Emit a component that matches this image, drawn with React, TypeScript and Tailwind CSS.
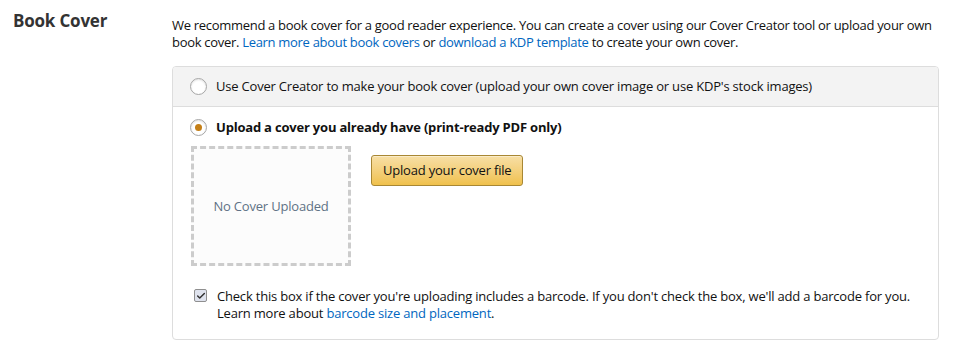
import { Check } from 'lucide-react';

const font = { fontFamily: '"Open Sans", "Noto Sans", sans-serif' };

const Radio = ({ checked }: { checked: boolean }) => (
  <span className="flex h-[17px] w-[17px] shrink-0 items-center justify-center rounded-full border border-[#a6a6a6] bg-white shadow-[inset_0_1px_2px_rgba(0,0,0,0.12)]">
    {checked && <span className="h-[7px] w-[7px] rounded-full bg-[#c47f17]" />}
  </span>
);

export default function App() {
  return (
    <div
      className="h-[352px] w-[956px] bg-white pt-[10px] text-[13px] leading-[17px] tracking-[-0.2px] text-[#111]"
      style={font}
    >
      <div className="flex">
        <h2 className="w-[172px] shrink-0 pl-[13px] text-[17px] font-bold leading-[22px] text-[#333]">Book Cover</h2>
        <div className="w-[780px]">
          <p className="pt-[7px] tracking-[-0.3px]">
            We recommend a book cover for a good reader experience. You can create a cover using our Cover Creator tool or
            upload your own
            <br />
            book cover. <a className="text-[#0066c0]">Learn more about book covers</a> or{' '}
            <a className="text-[#0066c0]">download a KDP template</a> to create your own cover.
          </p>

          <div className="mt-[15px] w-[767px] overflow-hidden rounded-[4px] border border-[#dddddd]">
            <div className="flex h-[40px] items-center gap-[9px] border-b border-[#dddddd] bg-[#f3f3f3] pl-[17px]">
              <Radio checked={false} />
              <span>Use Cover Creator to make your book cover (upload your own cover image or use KDP's stock images)</span>
            </div>

            <div className="pl-[17px] pt-[12px] pb-[17px]">
              <div className="flex items-center gap-[9px]">
                <Radio checked />
                <span className="font-bold">Upload a cover you already have (print-ready PDF only)</span>
              </div>

              <div className="mt-[10px] flex gap-[20px] pl-[1px]">
                <div className="flex h-[120px] w-[160px] items-center justify-center border-[3px] border-dashed border-[#cccccc] bg-[#fcfcfc] text-[#5f7285]">
                  No Cover Uploaded
                </div>
                <button className="mt-[9px] h-[31px] rounded-[3px] border border-[#a88734] bg-gradient-to-b from-[#f7dfa5] to-[#f0c14b] px-[11px] text-[13px] text-[#111] shadow-[inset_0_1px_0_rgba(255,255,255,0.4)]">
                  Upload your cover file
                </button>
              </div>

              <div className="mt-[22px] flex gap-[10px] pl-[4px]">
                <span className="mt-[1px] flex h-[13px] w-[13px] shrink-0 items-center justify-center rounded-[2px] border border-[#8f8f8f] bg-[#dfe3ee]">
                  <Check size={10} strokeWidth={3.5} className="text-[#333]" />
                </span>
                <p>
                  Check this box if the cover you're uploading includes a barcode. If you don't check the box, we'll add a
                  barcode for you.
                  <br />
                  Learn more about <a className="text-[#0066c0]">barcode size and placement</a>.
                </p>
              </div>
            </div>
          </div>
        </div>
      </div>
    </div>
  );
}
